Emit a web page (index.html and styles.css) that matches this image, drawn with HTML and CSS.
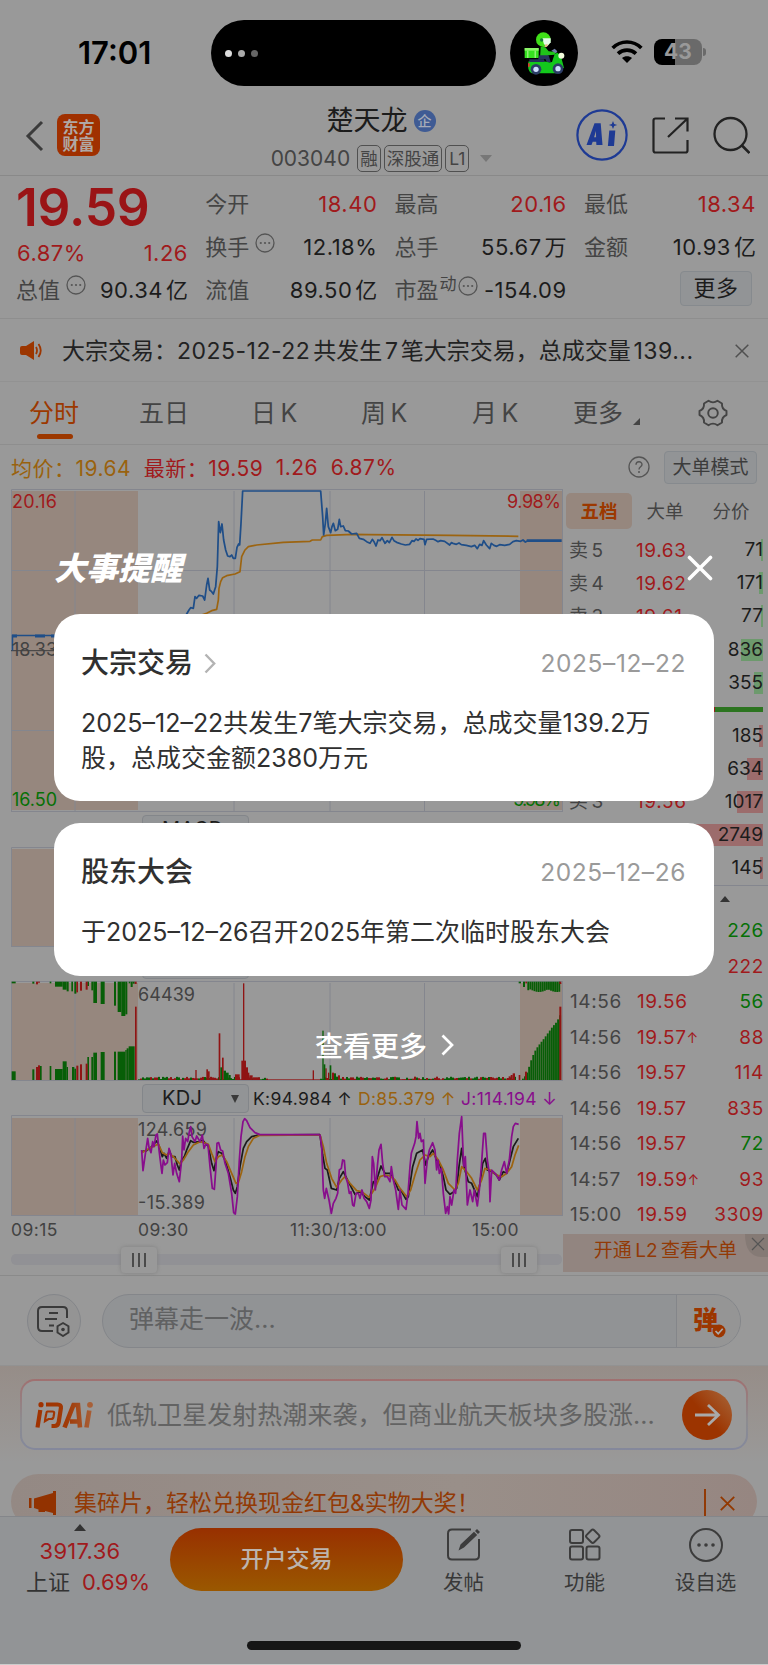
FILE: index.html
```html
<!DOCTYPE html>
<html lang="zh-CN">
<head>
<meta charset="utf-8">
<title>楚天龙 003040</title>
<link rel="stylesheet" href="styles.css">
</head>
<body>
<div class="screen">
  <div class="status">
    <span class="clock">17:01</span>
    <div class="island"><i></i><i></i><i></i></div>
    <div class="rider">
      <svg width="68" height="66" viewBox="0 0 204 198">
        <path d="M44 84h42v30H44z" fill="#35e21f"/><path d="M44 84h42v8H44z" fill="#8cf56a"/><path d="M52 92h3v22h-3zM74 92h3v22h-3z" fill="#bafaa0"/>
        <path d="M92 80l14 2 10 12 22 2-4 8-20 2-4 10H90z" fill="#20c41a"/>
        <circle cx="100" cy="59" r="22" fill="#3fe018"/><path d="M97 55h25v12l-10 12-10-6z" fill="#e5fbe8"/><circle cx="95" cy="60" r="5" fill="#157a3c"/><path d="M107 72l8 2-5 7h-7z" fill="#e8b48d"/>
        <path d="M88 106h28l6 20-10 3-6-12-22 3z" fill="#27365c"/>
        <path d="M124 92l10-6 8 8-4 6z" fill="#6f7da8"/>
        <path d="M56 124h42c14 0 16 6 28 2l8-24 8-4 10 8 6 22 4 16-16 2-8 14H66c-12-4-14-22-10-36z" fill="#13c81c"/>
        <path d="M58 118h44l2 8H58z" fill="#233158"/><path d="M54 130h5v10h-5z" fill="#e63030"/>
        <circle cx="78" cy="148" r="16" fill="#2c3c66"/><circle cx="78" cy="148" r="8" fill="#cfe0ff"/>
        <circle cx="144" cy="146" r="16" fill="#2c3c66"/><circle cx="144" cy="146" r="8" fill="#cfe0ff"/>
        <circle cx="154" cy="107" r="9" fill="#f2fbdc"/>
      </svg>
    </div>
    <svg class="wifi" width="32" height="23" viewBox="0 0 96 69"><path d="M5 24C29 0 67 0 91 24M21 41c15-14 39-14 54 0" fill="none" stroke="#000" stroke-width="11"/><path d="M33 54c8-7 22-7 30 0L48 69z" fill="#000"/></svg>
    <div class="battery"><span>43</span></div><i class="tip"></i>
  </div>

  <header class="head">
    <svg class="back" width="20" height="34" viewBox="0 0 20 34"><path d="M17 3L3 17l14 14" fill="none" stroke="#3b3b3b" stroke-width="3"/></svg>
    <div class="logo">东方<br>财富</div>
    <div class="name">
      <div class="name-top">楚天龙<span class="badge">企</span></div>
      <div class="name-sub"><span class="code">003040</span><b>融</b><b>深股通</b><b class="l1">L1</b><i></i></div>
    </div>
    <svg class="acts" width="174" height="52" viewBox="0 0 174 52">
      <circle cx="26" cy="26" r="24.6" fill="none" stroke="#1e3a94" stroke-width="2.2"/>
      <g fill="#1e3a94" fill-rule="evenodd"><path d="M10.500 36L18.500 14.200h6.200L26.500 36h-6.100l-.2-3.300h-3.500L15.500 36zM18.100 28.300h2l-.2-6.400zM33.300 21.500h6L38 37h-6.100z"/><path d="M37 12l1.200 2.900 3 1.100-3 1.100L37 20l-1.200-2.900-3-1.100 3-1.100z"/></g>
      <path d="M89 9.500H79.500a2 2 0 0 0-2 2v30a2 2 0 0 0 2 2h30a2 2 0 0 0 2-2V31M99 9.500h12.500v13M111 10L92 28" fill="none" stroke="#222" stroke-width="2.2"/>
      <circle cx="154.500" cy="25" r="16" fill="none" stroke="#222" stroke-width="2.300"/><path d="M166 36.500l7.500 7.500" stroke="#222" stroke-width="2.600"/>
    </svg>
  </header>

  <section class="quote">
    <div class="qcol first">
      <div class="price">19.59</div>
      <div class="row red"><span>6.87%</span><span>1.26</span></div>
      <div class="row"><label>总值<svg class="dots"><use href="#dots"/></svg></label><span>90.34<u>亿</u></span></div>
    </div>
    <div class="qcol">
      <div class="row"><label>今开</label><span class="red">18.40</span></div>
      <div class="row"><label>换手<svg class="dots"><use href="#dots"/></svg></label><span>12.18%</span></div>
      <div class="row"><label>流值</label><span>89.50<u>亿</u></span></div>
    </div>
    <div class="qcol">
      <div class="row"><label>最高</label><span class="red">20.16</span></div>
      <div class="row"><label>总手</label><span>55.67<u>万</u></span></div>
      <div class="row"><label>市盈<sup>动</sup><svg class="dots tight"><use href="#dots"/></svg></label><span>-154.09</span></div>
    </div>
    <div class="qcol">
      <div class="row"><label>最低</label><span class="red">18.34</span></div>
      <div class="row"><label>金额</label><span>10.93<u>亿</u></span></div>
      <div class="row end"><span class="more">更多</span></div>
    </div>
  </section>

  <div class="notice">
    <svg width="24" height="20" viewBox="0 0 24 20"><path d="M2 5h4l8-5v19l-8-5H2q-2 0-2-2V7q0-2 2-2z" fill="#9c3600"/><path d="M16 6q2 3.500 0 7M18.500 3q4.500 6.500 0 13" fill="none" stroke="#9c3600" stroke-width="1.800"/></svg>
    <p>大宗交易：<q>2025-12-22</q><s></s>共发生<s></s>7<s></s>笔大宗交易，总成交量<s></s><q>139...</q></p>
    <svg width="14" height="14" viewBox="0 0 14 14"><path d="M.7.7l12.600 12.600M13.300.7L.7 13.300" stroke="#505050" stroke-width="1.500"/></svg>
  </div>

  <nav class="tabs">
    <span class="on">分时</span><span>五日</span><span>日<s></s>K</span><span>周<s></s>K</span><span>月<s></s>K</span><span class="tri">更多</span>
    <svg width="30" height="28" viewBox="0 0 30 28"><path d="M10.500 1.800Q15 5 19.500 1.800L24 4.500Q23.500 10 28.500 12v4Q23.500 18 24 23.500L19.500 26.200Q15 23 10.500 26.200L6 23.500Q6.500 18 1.500 16v-4Q6.500 10 6 4.500z" fill="none" stroke="#444" stroke-width="1.900" stroke-linejoin="round"/><circle cx="15" cy="14" r="4.800" fill="none" stroke="#444" stroke-width="1.900"/></svg>
  </nav>

  <div class="avg">
    <span class="gold">均价：19.64</span><span class="red">最新：19.59</span><span class="red">1.26</span><span class="red">6.87%</span>
    <svg width="22" height="22" viewBox="0 0 22 22"><circle cx="11" cy="11" r="10" fill="none" stroke="#555" stroke-width="1.300"/><path d="M8 8.800c0-4 6-4 6-.3 0 2.300-3 2.200-3 5" fill="none" stroke="#555" stroke-width="1.400"/><circle cx="11" cy="16" r="1" fill="#555"/></svg>
    <span class="mode">大单模式</span>
  </div>

  <div class="board">
    <div class="charts">
      <svg class="main" width="563" height="323" viewBox="0 489 563 323">
        <path class="pre" d="M12 491h126v319H12zM520 491h42v319h-42z"/>
        <path class="grid" d="M11.500 812V489.500H563M11 811.500h552M75 491v320M234 491v320M330 491v320M424.500 491v320M11 570.500h552M11 730.500h552M562.500 490v322"/>
        <path d="M11 650.700h552" stroke="#3c3c3c" stroke-width="1"/>
        <path d="M12.500 650.500V635.500H60" fill="none" stroke="#1f4e88" stroke-width="1.500"/><path d="M12 636h5M35 636h10M51 636h6" stroke="#1f4e88" stroke-width="3"/>
        <g transform="translate(0 310) scale(.33333)" fill="none" stroke-linejoin="round">
          <path stroke="#9c6410" stroke-width="5" d="M560 930L620 910L635 902L650 898L655 870L657 835L662 815L668 803L680 797L705 792L720 785L725 740L735 720L745 710L770 705L850 697L930 694L937 690L962 690L967 680L980 676L1060 673L1104 674L1354 676L1555 679"/>
          <path stroke="#1f4e88" stroke-width="5.200" d="M550 930L560 912L567 900L572 893L580 895L585 860L590 865L597 856L608 858L614 870L620 825L624 805L629 840L635 845L640 852L647 830L652 770L656 635L661 668L666 642L671 690L677 720L683 738L690 740L695 735L700 745L706 745L711 712L716 702L719 705L723 640L728 543L962 543L968 620L971 675L976 640L980 595L985 650L992 668L996 650L1000 640L1006 662L1013 658L1018 628L1022 650L1030 648L1036 662L1045 663L1055 672L1070 670L1078 685L1090 688L1100 695L1110 700L1117 688L1122 695L1128 708L1134 690L1140 692L1146 683L1155 700L1162 692L1168 698L1176 682L1182 692L1190 697L1204 702L1216 705L1229 703L1236 692L1242 694L1248 687L1254 691L1260 686L1272 688L1275 704L1280 688L1299 687L1307 691L1314 695L1322 692L1334 694L1349 705L1354 698L1359 700L1369 703L1377 699L1384 704L1399 706L1414 710L1424 706L1432 716L1439 703L1446 706L1451 692L1459 705L1469 716L1474 700L1482 706L1490 709L1499 704L1514 706L1529 703L1539 695L1549 692L1562 694L1569 690L1576 696L1584 692"/>
          <path stroke="#1f4e88" stroke-width="8" d="M1580 692H1685"/>
        </g>
        <g class="lbl"><text x="12" y="508" textLength="45" class="r">20.16</text><text x="507" y="508" textLength="54" class="r">9.98%</text><text x="12" y="656" textLength="45">18.33</text><text x="12" y="806" textLength="45" class="g">16.50</text><text x="507" y="806" textLength="54" class="g">-9.98%</text></g>
      </svg>
      <div class="sel-row"><div class="sel">MACD</div></div>
      <svg class="macd" width="563" height="100" viewBox="0 847 563 100"><path class="pre" d="M12 849h126v97H12zM520 849h42v97h-42z"/><path class="grid" d="M11.500 946V847.500H563M11 946.500h552"/></svg>
      <div class="sel-row low"><div class="sel"></div></div>
      <svg class="vol" width="563" height="100" viewBox="0 981 563 100"><path class="pre" d="M12 983h126v97H12zM520 983h42v97h-42z"/><path class="grid" d="M11.500 1081V981.500H563M11 1080.500h552M75 983v97M234 983v97M330 983v97M424.500 983v97M562.500 980v102"/><g id="bars" transform="translate(0 960) scale(.33333)"></g><g class="lbl"><text x="138" y="1001" textLength="57">64439</text></g></svg>
      <div class="sel-row kdj"><div class="sel">KDJ<i></i></div><span class="k">K:94.984 ↑</span><span class="d">D:85.379 ↑</span><span class="j">J:114.194 ↓</span></div>
      <svg class="kd" width="563" height="101" viewBox="0 1115 563 101"><path class="pre" d="M12 1118h126v97H12zM520 1118h42v97h-42z"/><path class="grid" d="M11.500 1215V1115.500H563M11 1215.500h552M75 1118v97M234 1118v97M330 1118v97M424.500 1118v97M562.500 1114v102"/>
        <g class="lbl"><text x="138" y="1136" textLength="69">124.659</text><text x="138" y="1209" textLength="67">-15.389</text></g>
        <g transform="translate(0 960) scale(.33333)" fill="none" stroke-width="5.200" stroke-linejoin="round">
          <path stroke="#1b1b1b" d="M425 575L440 572L455 560L470 543L478 560L487 590L492 580L500 595L508 572L515 590L525 590L532 615L538 630L545 600L553 590L560 570L572 542L580 547L600 545L608 540L618 552L625 558L635 610L642 632L650 590L655 575L665 580L675 600L690 650L700 690L706 700L712 680L720 620L730 565L740 545L755 530L775 525L960 524"/>
          <path stroke="#9c6410" d="M425 578L445 567L475 552L487 578L500 585L508 580L520 590L540 612L550 600L565 575L580 555L600 545L612 548L625 553L635 580L645 605L655 590L667 585L680 605L695 640L708 670L715 668L725 635L735 590L745 560L760 535L780 526L960 525"/>
          <path stroke="#880e8c" d="M425 570L429 632L437 575L443 535L447 562L453 578L458 545L462 560L468 525L472 522L477 570L482 610L486 640L490 600L495 615L502 608L507 565L513 585L519 645L524 610L530 640L538 665L545 600L548 528L552 570L557 535L563 545L568 515L572 500L576 530L585 545L590 528L600 545L607 525L612 565L618 552L624 555L630 620L637 685L643 688L648 620L651 550L656 548L662 570L668 573L675 610L685 640L695 700L701 758L706 762L712 710L718 600L723 530L729 485L734 476L740 482L750 503L765 518L780 524L960 524"/>
          <g transform="translate(840 0)">
            <path stroke="#1b1b1b" d="M120 524L128 585L135 625L142 630L154 685L170 690L178 655L190 635L205 665L225 703L240 695L255 710L268 720L280 665L287 670L303 618L315 640L330 640L345 665L355 690L365 695L378 718L385 710L392 660L398 620L410 580L428 570L437 615L445 590L458 570L470 600L480 615L490 650L498 690L510 703L522 695L530 685L537 620L545 565L552 620L565 665L575 670L592 710L600 670L608 610L616 595L622 630L635 635L650 645L658 660L670 635L680 640L690 600L700 560L715 535"/>
            <path stroke="#9c6410" d="M120 524L130 560L140 610L155 655L170 682L185 660L195 650L210 670L230 692L245 695L268 712L285 685L300 650L315 645L330 648L345 660L360 685L380 710L392 690L405 645L420 600L435 585L450 590L460 580L475 600L490 630L505 670L525 690L535 670L545 620L560 635L575 655L592 690L605 660L615 625L630 630L650 645L665 650L680 640L695 620L705 585L716 556"/>
            <path stroke="#880e8c" d="M120 524L125 560L130 690L134 715L139 685L147 720L154 760L160 730L168 715L173 700L178 630L184 625L188 600L193 602L197 650L203 670L208 700L213 695L218 735L222 738L228 700L235 700L240 715L246 690L252 715L260 725L268 745L273 720L277 590L281 610L286 690L292 620L297 570L303 553L308 610L314 650L322 650L330 665L334 620L340 660L347 690L355 748L360 690L366 735L378 748L384 700L390 620L394 580L404 550L408 530L411 485L416 535L420 520L424 545L430 540L435 670L442 600L448 570L458 548L465 570L470 630L474 600L478 640L484 625L490 700L497 760L502 740L506 762L510 710L515 735L522 690L527 700L532 600L538 520L545 470L551 620L556 590L562 735L570 690L578 725L583 690L592 738L598 690L604 620L611 520L616 520L622 600L628 640L630 725L635 630L645 640L658 660L665 630L673 605L680 640L688 600L695 530L700 500L706 490L716 493"/>
          </g>
        </g>
      </svg>
      <div class="times"><span>09:15</span><span>09:30</span><span>11:30/13:00</span><span>15:00</span></div>
      <div class="slider"><div class="knob"><i></i><i></i><i></i></div><div class="knob"><i></i><i></i><i></i></div></div>
    </div>
    <aside class="book">
      <div class="btabs"><span class="on">五档</span><span>大单</span><span>分价</span></div>
      <div class="lv">
        <div><em>卖<s></s>5</em><b>19.63</b><span class="ga" style="--w:2px">71</span></div>
        <div><em>卖<s></s>4</em><b>19.62</b><span class="ga" style="--w:4px">171</span></div>
        <div><em>卖<s></s>3</em><b>19.61</b><span class="ga" style="--w:2px">77</span></div>
        <div><em></em><b></b><span class="ga" style="--w:22px">836</span></div>
        <div><em></em><b></b><span class="ga" style="--w:9px">355</span></div>
      </div>
      <div class="ratio"></div>
      <div class="lv">
        <div><em></em><b></b><span class="ra" style="--w:4px">185</span></div>
        <div><em></em><b></b><span class="ra" style="--w:16px">634</span></div>
        <div><em>买<s></s>3</em><b>19.56</b><span class="ra" style="--w:26px">1017</span></div>
        <div><em></em><b></b><span class="ra" style="--w:67px">2749</span></div>
        <div><em></em><b></b><span class="ra" style="--w:3px">145</span></div>
      </div>
      <div class="fold"><i></i></div>
      <div class="deals">
        <div><em></em><b></b><span class="green">226</span></div>
        <div><em></em><b></b><span>222</span></div>
        <div><em>14:56</em><b>19.56</b><span class="green">56</span></div>
        <div><em>14:56</em><b>19.57<small>↑</small></b><span>88</span></div>
        <div><em>14:56</em><b>19.57</b><span>114</span></div>
        <div><em>14:56</em><b>19.57</b><span>835</span></div>
        <div><em>14:56</em><b>19.57</b><span class="green">72</span></div>
        <div><em>14:57</em><b>19.59<small>↑</small></b><span>93</span></div>
        <div><em>15:00</em><b>19.59</b><span>3309</span></div>
      </div>
      <div class="l2"><span>开通<s></s>L2<s></s>查看大单</span><svg width="23" height="23" viewBox="0 0 23 23"><path d="M0 0h23v23H16Q0 22 0 0z" fill="#857a75"/><path d="M7 4l12 12M19 4L7 16" stroke="#555" stroke-width="1.200"/></svg></div>
    </aside>
  </div>

  <div class="chat">
    <div class="chat-set"><svg width="36" height="32" viewBox="0 0 36 32"><path d="M17 26H6q-4 0-4-4V6q0-4 4-4h21q4 0 4 4v7M13 8h9M9 14h12M13 20.500h5" fill="none" stroke="#3a3a3a" stroke-width="2"/><path d="M27 18l5.500 3.200v6.300L27 31l-5.500-3.500v-6.300z" fill="none" stroke="#3a3a3a" stroke-width="1.900"/><circle cx="27" cy="24.500" r="1.800" fill="#3a3a3a"/></svg></div>
    <div class="chat-in"><span>弹幕走一波...</span><div class="dan">弹<svg width="14" height="14" viewBox="0 0 14 14"><circle cx="7" cy="7" r="6.500" fill="#9c3600"/><path d="M3.500 7l2.700 2.700 4.500-5" fill="none" stroke="#aaa" stroke-width="1.700"/></svg></div></div>
  </div>

  <div class="ask">
    <div class="ask-box">
      <svg width="58" height="28" viewBox="0 0 58 28"><defs><linearGradient id="ga" gradientUnits="userSpaceOnUse" x1="0" y1="0" x2="58" y2="0"><stop offset="0" stop-color="#a03200"/><stop offset=".55" stop-color="#a03a06"/><stop offset="1" stop-color="#a86038"/></linearGradient></defs><g fill="none" stroke="url(#ga)"><path d="M5.300 9L2.500 26.500M11 3.500h11.500q4 0 3.400 3.600l-2.200 14q-.6 3.900-4.200 3.900h-3" stroke-width="4.200"/><path d="M12 10.500h5.500q2 0 1.600 2l-.6 3.500q-.4 2-2.400 2h-2.600l-3.500 2.200.4-3.200.9-4.500q.3-2 .7-2z" stroke-width="2.200"/><path d="M29.500 26.500L38.500 4H43l2 22.500M35 20.500h9" stroke-width="4.600"/><path d="M54.300 9.500L51.500 26.500" stroke-width="4.600"/></g><circle cx="6" cy="3.700" r="2.600" fill="#a03200"/><circle cx="55" cy="3.800" r="2.900" fill="#a86038"/></svg>
      <p>低轨卫星发射热潮来袭，但商业航天板块多股涨...</p>
      <svg width="50" height="50" viewBox="0 0 50 50"><defs><linearGradient id="gb" x1=".2" y1=".7" x2="1" y2="0"><stop offset=".3" stop-color="#9c3400"/><stop offset="1" stop-color="#a8683c"/></linearGradient></defs><circle cx="25" cy="25" r="25" fill="url(#gb)"/><path d="M13 25h23M26 15l10.500 10L26 35" fill="none" stroke="#a9a9a9" stroke-width="2.800"/></svg>
    </div>
  </div>

  <div class="promo">
    <svg width="28" height="24" viewBox="0 0 28 24"><path d="M0 7h2.500v10H0zM5 7.500L24 2V0h3v24h-3v-2l-8-2v1H9.500v-2.500L5 17z" fill="#923200"/></svg>
    <p>集碎片，轻松兑换现金红包&amp;实物大奖！</p>
    <i></i>
    <svg width="15" height="15" viewBox="0 0 15 15"><path d="M.8.8l13.400 13.400M14.200.8L.8 14.200" stroke="#923800" stroke-width="1.800"/></svg>
  </div>

  <footer class="foot">
    <div class="foot-row">
      <div class="idx"><i></i><span class="red">3917.36</span><div>上证<span class="red">0.69%</span></div></div>
      <div class="open">开户交易</div>
      <div class="act"><svg width="36" height="34" viewBox="0 0 36 34"><path d="M25 1.500H6Q2 1.500 2 5.500v22q0 4 4 4h23q4 0 4-4V11" fill="none" stroke="#3c3c3c" stroke-width="2"/><path d="M12.500 22.500l2-6L28 3.800l3.200 3.200L18 19.500zM29 3l2-2 3 3-2 2z" fill="#3c3c3c"/></svg><span>发帖</span></div>
      <div class="act"><svg width="34" height="34" viewBox="0 0 34 34"><g fill="none" stroke="#3c3c3c" stroke-width="2"><rect x="2" y="2" width="13" height="13" rx="2"/><rect x="2" y="18.500" width="13" height="13" rx="2"/><rect x="18.500" y="18.500" width="13" height="13" rx="2"/><rect x="19.500" y="3" width="10.500" height="10.500" rx="2" transform="rotate(45 24.750 8.250)"/></g></svg><span>功能</span></div>
      <div class="act"><svg width="34" height="34" viewBox="0 0 34 34"><circle cx="17" cy="17" r="16" fill="none" stroke="#3c3c3c" stroke-width="2"/><g fill="#3c3c3c"><circle cx="10" cy="17" r="1.800"/><circle cx="17" cy="17" r="1.800"/><circle cx="24" cy="17" r="1.800"/></g></svg><span>设自选</span></div>
    </div>
    <div class="home"></div>
  </footer>

  <div class="modal">
    <div class="m-head"><h2>大事提醒</h2><svg width="26" height="26" viewBox="0 0 26 26"><path d="M2.500 2.500l21 21M23.500 2.500l-21 21" stroke="#fff" stroke-width="3.600" stroke-linecap="round"/></svg></div>
    <div class="card one">
      <div class="c-top"><h3>大宗交易<svg width="12" height="21" viewBox="0 0 12 21"><path d="M1.500 1.500l8.700 9-8.700 9" fill="none" stroke="#b3b3b3" stroke-width="2.400"/></svg></h3><time>2025–12–22</time></div>
      <p>2025–12–22共发生7笔大宗交易，总成交量139.2万<br>股，总成交金额2380万元</p>
    </div>
    <div class="card two">
      <div class="c-top"><h3>股东大会</h3><time>2025–12–26</time></div>
      <p>于2025–12–26召开2025年第二次临时股东大会</p>
    </div>
    <div class="m-more">查看更多<svg width="13" height="22" viewBox="0 0 13 22"><path d="M1.500 1.500l9.500 9.500L1.500 20.500" fill="none" stroke="#fff" stroke-width="2.700"/></svg></div>
  </div>
</div>
<svg width="0" height="0" class="defs"><symbol id="dots" viewBox="0 0 20 20"><circle cx="10" cy="10" r="9" fill="none" stroke="#555" stroke-width="1.300"/><g fill="#555"><circle cx="5.800" cy="10" r="1.100"/><circle cx="10" cy="10" r="1.100"/><circle cx="14.200" cy="10" r="1.100"/></g></symbol></svg>
<script src="charts.js"></script>
</body>
</html>
```
FILE: styles.css
```css
* { box-sizing: border-box; }
body { margin: 0; background: #999; }
.screen { position: relative; width: 768px; height: 1665px; overflow: hidden; background: #999; color: #1c1c1c; font-family: Inter, "Noto Sans CJK SC", sans-serif; display: flex; flex-direction: column; }
.screen > * { flex: none; }
p, h2, h3 { margin: 0; font-weight: 400; white-space: nowrap; }
em, i, u, s { font-style: normal; text-decoration: none; }
q { quotes: none; letter-spacing: .5px; }
b { font-weight: 400; }
s { display: inline-block; width: .18em; }
svg { display: block; flex: none; }
.defs { position: absolute; }
.red { color: #a01a1c; }
.green { color: #067006; }
.gold { color: #99620e; }

.status { height: 107px; display: flex; align-items: flex-start; padding: 20px 62px 0 78px; }
.clock { width: 133px; font-size: 31px; line-height: 66px; font-weight: 600; color: #000; }
.island { width: 285px; height: 66px; border-radius: 33px; background: #000; display: flex; align-items: center; gap: 6px; padding-left: 14px; }
.island i { width: 7px; height: 7px; border-radius: 50%; background: #ddd; }
.island i:nth-child(2) { background: #aaa; }
.island i:nth-child(3) { background: #666; }
.rider { margin-left: 14px; width: 68px; height: 66px; border-radius: 33px; background: #000; }
.wifi { margin: 20px 11px 0 33px; }
.battery { margin-top: 19px; width: 48px; height: 26px; border-radius: 8px; background: linear-gradient(90deg, #000 21px, #6a6a6a 21px); font-size: 21px; line-height: 26px; font-weight: 700; color: #999; text-align: center; }
.tip { margin: 28px 0 0 1px; width: 3px; height: 8px; border-radius: 0 4px 4px 0; background: #6a6a6a; }

.head { height: 69px; display: flex; border-bottom: 1px solid #898989; }
.back { margin: 12px 0 0 25px; }
.logo { margin: 7px 0 0 12px; width: 43px; height: 42px; border-radius: 8px; background: #a03000; color: #b0a8a4; font: 700 16px/17px "Noto Sans CJK SC", sans-serif; text-align: center; padding-top: 4px; }
.name { width: 400px; margin-left: 85px; display: flex; flex-direction: column; align-items: center; }
.name-top { margin: -3px 0 0 -8px; height: 34px; display: flex; align-items: center; gap: 6px; font-size: 27px; line-height: 34px; }
.badge { width: 22px; height: 22px; border-radius: 50%; background: #3f5b94; color: #a6abb8; font-size: 14px; line-height: 22px; text-align: center; font-weight: 500; }
.name-sub { margin: 7px 0 0 -7px; display: flex; align-items: center; gap: 3px; color: #444; height: 26px; }
.code { font-size: 21px; margin-right: 4px; }
.name-sub b { height: 27px; border: 1px solid #505050; border-radius: 5px; padding: 0 2px; font-size: 17.500px; line-height: 26px; }
.name-sub .l1 { padding: 0 3px; }
.name-sub i { margin-left: 8px; border: 6px solid transparent; border-top: 7px solid #777; border-bottom: 0; }
.acts { margin: 2px 0 0 -9px; }

.quote { height: 143px; display: flex; gap: 18.300px; padding: 7px 12px 0 17px; border-bottom: 1px solid #8e8e8e; }
.qcol { width: 171px; font-size: 22px; }
.row { height: 43px; display: flex; align-items: center; justify-content: space-between; line-height: 43px; white-space: nowrap; }
.row > span { letter-spacing: .5px; }
.row u { margin-left: 3px; letter-spacing: 0; }
.row label { display: flex; color: #444; margin-left: -1px; }
.first .price { height: 49px; line-height: 49px; margin-left: -1px; font-size: 51.500px; font-weight: 600; color: #9a1416; letter-spacing: -.2px; }
.first .row:nth-child(2) { height: 43px; }
.first .row:nth-child(3) { height: 31px; line-height: 31px; }
.dots { width: 20px; height: 20px; margin: 7px 0 0 6px; }
.first .dots { margin-top: 0; }
.dots.tight { margin-left: 1px; }
sup { font-size: 17px; line-height: 30px; margin-left: 1px; }
.row.end { justify-content: flex-end; padding-right: 4px; }
.more { width: 72px; height: 35px; border: 1px solid #868a8e; border-radius: 4px; background: #929496; line-height: 33px; text-align: center; margin-top: -4px; }

.notice { height: 63px; display: flex; align-items: center; padding: 1px 19px 0 20px; border-bottom: 1px solid #929292; }
.notice p { flex: 1; margin-left: 18px; font-size: 23px; line-height: 60px; color: #222; }
.notice s { width: .12em; }

.tabs { height: 63px; position: relative; display: flex; align-items: center; padding-left: 29px; font-size: 25px; line-height: 60px; color: #444; border-bottom: 1px solid #8e8e8e; }
.tabs span { width: 110px; white-space: nowrap; position: relative; }
.tabs .on { color: #9c3800; }
.tabs .on::after { content: ""; position: absolute; left: 8px; top: 51px; width: 36px; height: 5px; border-radius: 3px; background: #9c3800; }
.tabs span:nth-child(2) { width: 112px; }
.tabs span:nth-child(4) { width: 111px; }
.tabs span:nth-child(5) { width: 101px; }
.tabs .tri { width: 125px; }
.tabs .tri::after { content: ""; position: absolute; left: 60px; top: 35px; border-left: 7px solid transparent; border-bottom: 7px solid #444; }

.avg { height: 44px; display: flex; align-items: center; padding: 0 11px; font-size: 21px; letter-spacing: .5px; white-space: nowrap; }
.avg span { margin-right: 12.500px; }
.avg svg { margin-left: auto; margin-right: 14px; }
.avg .mode { margin: 0; width: 93px; height: 33px; border: 1px solid #868a8e; border-radius: 4px; background: #929496; color: #3c3c3c; font-size: 19px; letter-spacing: 0; line-height: 31px; text-align: center; }

.board { height: 787px; display: flex; border-bottom: 1px solid #8a8a8a; }
.charts { width: 563px; display: flex; flex-direction: column; }
.pre { fill: #96877e; }
.grid { fill: none; stroke: #84868e; stroke-width: 1; }
.lbl { font-size: 18px; fill: #424242; }
.lbl .r { fill: #a01a1c; }
.lbl .g { fill: #067006; }
.sel-row { height: 35px; display: flex; align-items: center; padding-left: 142px; font-size: 17.500px; letter-spacing: .35px; white-space: nowrap; }
.sel-row.low { height: 34px; }
.sel-row.kdj { height: 34px; }
.sel { width: 107px; height: 29px; border: 1px solid #83868a; border-radius: 4px; background: #929496; font-size: 20px; line-height: 27px; padding-left: 19px; position: relative; }
.sel i { position: absolute; right: 9px; top: 10px; border: 4.500px solid transparent; border-top: 8px solid #3a3a3a; border-bottom: 0; }
.kdj .k { margin-left: 4px; width: 105px; }
.kdj .d { color: #99620e; width: 103px; }
.kdj .j { color: #880e8c; }
.times { height: 28px; display: grid; grid-template-columns: 127px 152px 182px 1fr; padding-left: 11px; font-size: 17.500px; letter-spacing: .4px; line-height: 28px; color: #424242; white-space: nowrap; }
.slider { height: 11px; margin: 10px 1px 0 11px; border-radius: 5px; background: #919195; display: flex; justify-content: space-between; align-items: center; padding: 0 25px 0 110px; }
.knob { width: 36px; height: 26px; border-radius: 4px; background: #999; box-shadow: 0 0 4px #808080; display: flex; align-items: center; justify-content: center; gap: 4px; }
.knob i { width: 2px; height: 14px; background: #4a4a4a; }

.book { width: 205px; }
.btabs { height: 44.500px; display: flex; align-items: center; padding: 0 0 1px 3px; font-size: 18.500px; color: #444; }
.btabs span { width: 66px; height: 36px; line-height: 36px; border-radius: 5px; text-align: center; }
.btabs .on { background: #96877e; color: #9c3800; font-weight: 700; }
.book em, .book b { flex: none; white-space: nowrap; }
.book em { color: #444; }
.book b { color: #a01a1c; letter-spacing: .6px; }
.lv { font-size: 19px; }
.lv div { height: 33.200px; display: flex; align-items: center; padding-left: 6px; line-height: 33px; }
.lv em { width: 67px; }
.lv b { width: 60px; }
.lv span { width: 67px; height: 22px; line-height: 22px; margin-right: 5px; text-align: right; background-repeat: no-repeat; background-position: right; background-size: var(--w) 100%; }
.lv .ga { background-image: linear-gradient(#6d9a6d, #6d9a6d); }
.lv .ra { background-image: linear-gradient(#9c6c6c, #9c6c6c); }
.ratio { height: 5px; margin: 8px 5px 6.500px 6px; background: linear-gradient(90deg, #9c1c1c 146px, #2c7420 146px); }
.fold { height: 28px; border-top: 1px solid #84868e; display: flex; justify-content: flex-end; padding: 10px 38px 0 0; }
.fold i { border: 5px solid transparent; border-bottom: 6px solid #333; border-top: 0; height: 0; }
.deals { font-size: 19px; letter-spacing: .6px; margin-bottom: 1.500px; }
.deals div { height: 35.500px; display: flex; align-items: center; padding: 0 4px 0 7px; line-height: 35px; }
.deals em { width: 67px; }
.deals b { width: 70px; }
.deals span { flex: 1; text-align: right; color: #a01a1c; }
.deals .green { color: #067006; }
.deals small { font-size: 14px; vertical-align: 1px; }
.l2 { height: 38px; background: #928580; display: flex; align-items: flex-start; justify-content: flex-end; font-size: 19px; line-height: 34px; color: #923a06; }
.l2 span { margin-right: 8px; white-space: nowrap; }

.chat { height: 90px; display: flex; align-items: center; padding: 0 27px; border-bottom: 1px solid #929292; }
.chat-set { width: 54px; height: 54px; border: 1px solid #84868a; border-radius: 50%; background: #949494; display: flex; align-items: center; justify-content: center; }
.chat-in { margin-left: 21px; width: 639px; height: 54px; border: 1px solid #84868a; border-radius: 27px; background: #919395; display: flex; justify-content: space-between; padding-left: 26px; font-size: 25px; line-height: 49px; color: #606162; overflow: hidden; }
.dan { width: 64px; background: #959595; border-left: 1px solid #84868a; display: flex; padding: 0 0 0 16px; font-size: 25px; line-height: 51px; font-weight: 900; color: #9c3600; }
.dan svg { margin: 29px 0 0 -6px; }

.ask { height: 96px; background: linear-gradient(#968d88, #999694 75%, #999); padding: 13px 20px 0; }
.ask-box { height: 71px; border: 2px solid transparent; border-radius: 15px; background: linear-gradient(#999, #999) padding-box, linear-gradient(#a07070, #8c8c90 60%, #84889c) border-box; display: flex; align-items: center; justify-content: space-between; padding: 0 14px 0 13px; }
.ask-box p { flex: 1; margin-left: 14px; font-size: 25px; line-height: 66px; color: #636363; letter-spacing: .05px; }

.promo { height: 55px; margin: 12px 11px -13px; border-radius: 28px; background: linear-gradient(90deg, #948984, #998f89 60%, #968681); display: flex; align-items: center; padding: 3px 22px 0 18px; }
.promo p { flex: 1; margin-left: 17px; font-size: 23px; line-height: 50px; color: #923a06; }
.promo i { width: 2px; height: 28px; background: #923a06; margin-right: 14px; }

.foot { position: relative; height: 149px; background: #929496; border-top: 1px solid #84868a; border-bottom: 1px solid #ccc; }
.foot-row { display: flex; height: 80px; }
.idx { width: 134px; margin-left: 13px; margin-right: 7px; font-size: 22px; color: #333; padding-top: 7px; display: flex; flex-direction: column; align-items: center; white-space: nowrap; }
.idx i { border: 6px solid transparent; border-bottom: 7px solid #333; border-top: 0; height: 0; }
.idx > span { line-height: 24px; margin-top: 8px; height: 31px; letter-spacing: .3px; }
.idx div { line-height: 24px; margin-left: 16px; }
.idx div span { margin-left: 12px; }
.open { margin: 11px 0 0 16px; width: 233px; height: 63px; border-radius: 32px; background: linear-gradient(#983000, #9a5800); color: #bcb4ae; font-size: 23px; line-height: 62px; text-align: center; font-weight: 500; }
.act { width: 121px; display: flex; flex-direction: column; align-items: center; padding-top: 11px; font-size: 20.500px; color: #383838; }
.act span { line-height: 24px; margin-top: 9px; }
.home { margin: 44px auto 0 247px; width: 274px; height: 9px; border-radius: 5px; background: #161616; }

.modal { position: absolute; left: 54px; top: 548px; width: 660px; color: #303030; }
.m-head { display: flex; justify-content: space-between; align-items: center; height: 66px; padding: 0 1px 26px 0; }
.m-head h2 { font: italic 900 32px/36px "Noto Sans CJK SC", sans-serif; height: 40px; color: #fff; }
.card { background: #fff; border-radius: 26px; padding: 29px 28px 0 27px; }
.one { height: 187px; margin-bottom: 22px; }
.two { height: 153px; }
.c-top { display: flex; justify-content: space-between; align-items: center; height: 40px; }
.card h3 { display: flex; align-items: center; gap: 11px; font-size: 28px; font-weight: 500; line-height: 40px; }
.card time { font-size: 24.500px; letter-spacing: .6px; color: #9a9a9a; }
.card p { margin-top: 23px; font-size: 25px; line-height: 35px; }
.m-more { display: flex; align-items: center; gap: 14px; height: 40px; margin: 49px 0 0 261px; font-size: 28px; font-weight: 500; color: #fff; }
```
FILE: charts.js
```js
const R = "#8f1414", G = "#075e07";
const out = [];
const bar = (x0, x1, y0, y1, c) => out.push(`<rect x="${x0}" y="${y0}" width="${x1 - x0}" height="${y1 - y0}" fill="${c}"/>`);

// call auction, matched volume
[[35,47,334],[97,103,328],[120,125,318],[149,154,318],[165,188,327],[188,200,304],[200,204,321],[216,223,321],[223,228,326],[262,267,291],[274,279,291],[280,291,278],[302,314,276],[342,348,275],[353,376,275],[376,380,270],[380,386,265],[386,404,259]].forEach(([a, b, y]) => bar(a, b, y, 360, G));
[[108,114,321],[114,120,316],[229,235,317],[240,246,313],[257,263,311],[405,410,140]].forEach(([a, b, y]) => bar(a, b, y, 360, R));
// call auction, unmatched volume
[[35,47,70],[97,103,71],[149,154,70],[165,188,80],[188,200,89],[200,206,94],[214,219,94],[223,229,101],[262,267,78],[274,280,91],[280,291,129],[302,314,132],[342,348,137],[353,364,156],[364,376,168],[376,382,163],[386,391,70],[392,398,81],[398,404,71]].forEach(([a, b, y]) => bar(a, b, 65, y, G));
[[108,114,73],[114,120,68],[229,234,97],[240,246,92],[257,263,89],[404,410,72]].forEach(([a, b, y]) => bar(a, b, 65, y, R));

// continuous trading
let seed = 7;
const rnd = () => (seed = seed * 16807 % 2147483647) / 2147483647;
for (let x = 414; x < 1546; x += 6) {
  const quiet = x > 800 && x < 960;
  bar(x, x + 6, 360 - (quiet ? 2 : 2 + rnd() * 8), 360, quiet || rnd() < .5 ? R : G);
}
[[586,590,330],[619,624,328],[624,629,334],[656,661,220],[666,671,293],[724,738,302],[729,733,70],[738,744,322],[744,748,338],[748,758,346],[758,780,352],[705,719,343],[938,942,331],[976,980,325],[984,988,338],[996,1002,338],[1014,1020,346],[1520,1526,354],[1526,1532,349],[1532,1538,345],[1538,1545,340],[1556,1561,345]].forEach(([a, b, y]) => bar(a, b, y, 360, R));
[[661,666,322],[671,678,332],[678,686,338],[686,692,345],[967,971,212],[971,976,313],[989,994,316],[1002,1008,340]].forEach(([a, b, y]) => bar(a, b, y, 360, G));

// closing auction
const pts = [[726,356],[734,347],[742,330],[748,308],[757,285],[765,268],[778,250],[790,235],[802,218],[815,200],[828,185],[838,165]];
for (let x = 726; x < 838; x += 6.2) {
  const i = Math.max(1, pts.findIndex(p => p[0] >= x));
  const [a, b] = [pts[i - 1], pts[i]];
  bar(840 + x, 845.6 + x, a[1] + (b[1] - a[1]) * (x - a[0]) / (b[0] - a[0]), 360, G);
}
bar(1575, 1581, 335, 360, R);
bar(1678, 1684, 140, 360, R);
for (let x = 742; x < 837; x += 6.2) bar(840 + x, 845.6 + x, 65, 88 + 8 * Math.abs(Math.sin(x / 17)), G);
bar(1556, 1563, 65, 70, G);
bar(1569, 1575, 65, 81, G);
bar(1576, 1581, 65, 70, R);
bar(1678, 1684, 65, 72, R);
document.getElementById("bars").innerHTML = out.join("");
```
